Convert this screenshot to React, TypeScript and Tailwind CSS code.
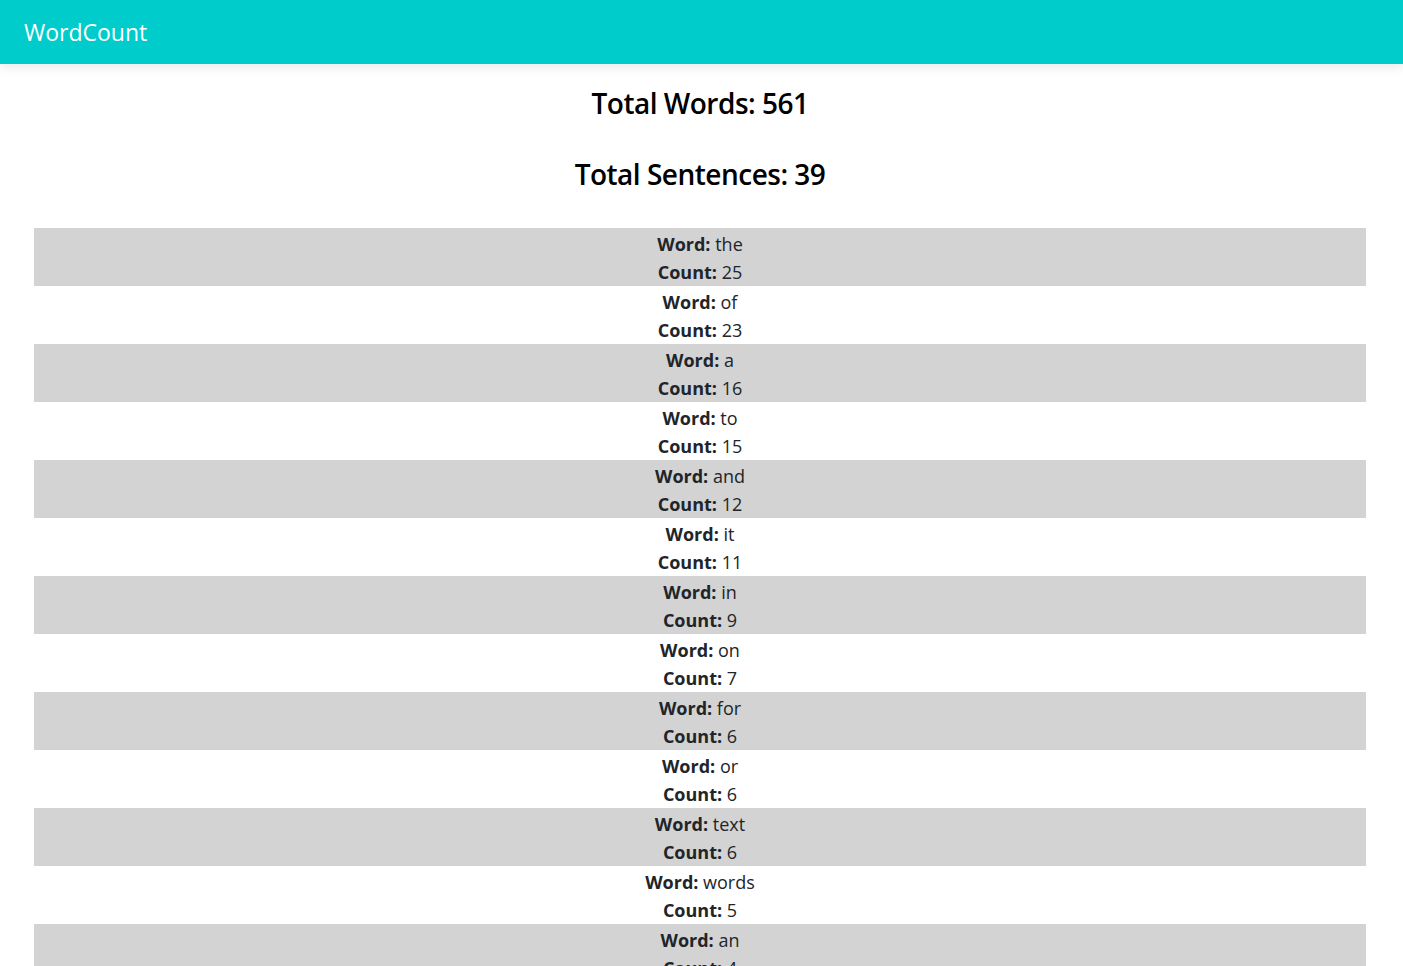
const words: [string, number][] = [
  ['the', 25],
  ['of', 23],
  ['a', 16],
  ['to', 15],
  ['and', 12],
  ['it', 11],
  ['in', 9],
  ['on', 7],
  ['for', 6],
  ['or', 6],
  ['text', 6],
  ['words', 5],
  ['an', 4],
  ['is', 4],
  ['as', 3],
]

export default function App() {
  return (
    <div className="min-h-screen bg-white text-[#212529] font-['Open_Sans',sans-serif]">
      <nav className="h-16 bg-[#00cccc] flex items-center px-6 shadow-[0_4px_10px_rgba(0,0,0,0.08)] relative">
        <span className="text-white text-[23px]">WordCount</span>
      </nav>

      <div className="pl-[34px] pr-[37px]">
        <h3 className="text-center text-black text-[28px] leading-[34px] font-semibold mt-[22px] tracking-[-0.5px]">
          Total Words: 561
        </h3>
        <h3 className="text-center text-black text-[28px] leading-[34px] font-semibold mt-[37px] tracking-[-0.5px]">
          Total Sentences: 39
        </h3>

        <ul className="mt-[37px]">
          {words.map(([w, c], i) => (
            <li
              key={w}
              className={`pt-[2px] text-center text-[18px] leading-[28px] ${i % 2 === 0 ? 'bg-[#d3d3d3]' : 'bg-white'}`}
            >
              <div>
                <b className="font-bold">Word:</b> {w}
              </div>
              <div>
                <b className="font-bold">Count:</b> {c}
              </div>
            </li>
          ))}
        </ul>
      </div>
    </div>
  )
}
